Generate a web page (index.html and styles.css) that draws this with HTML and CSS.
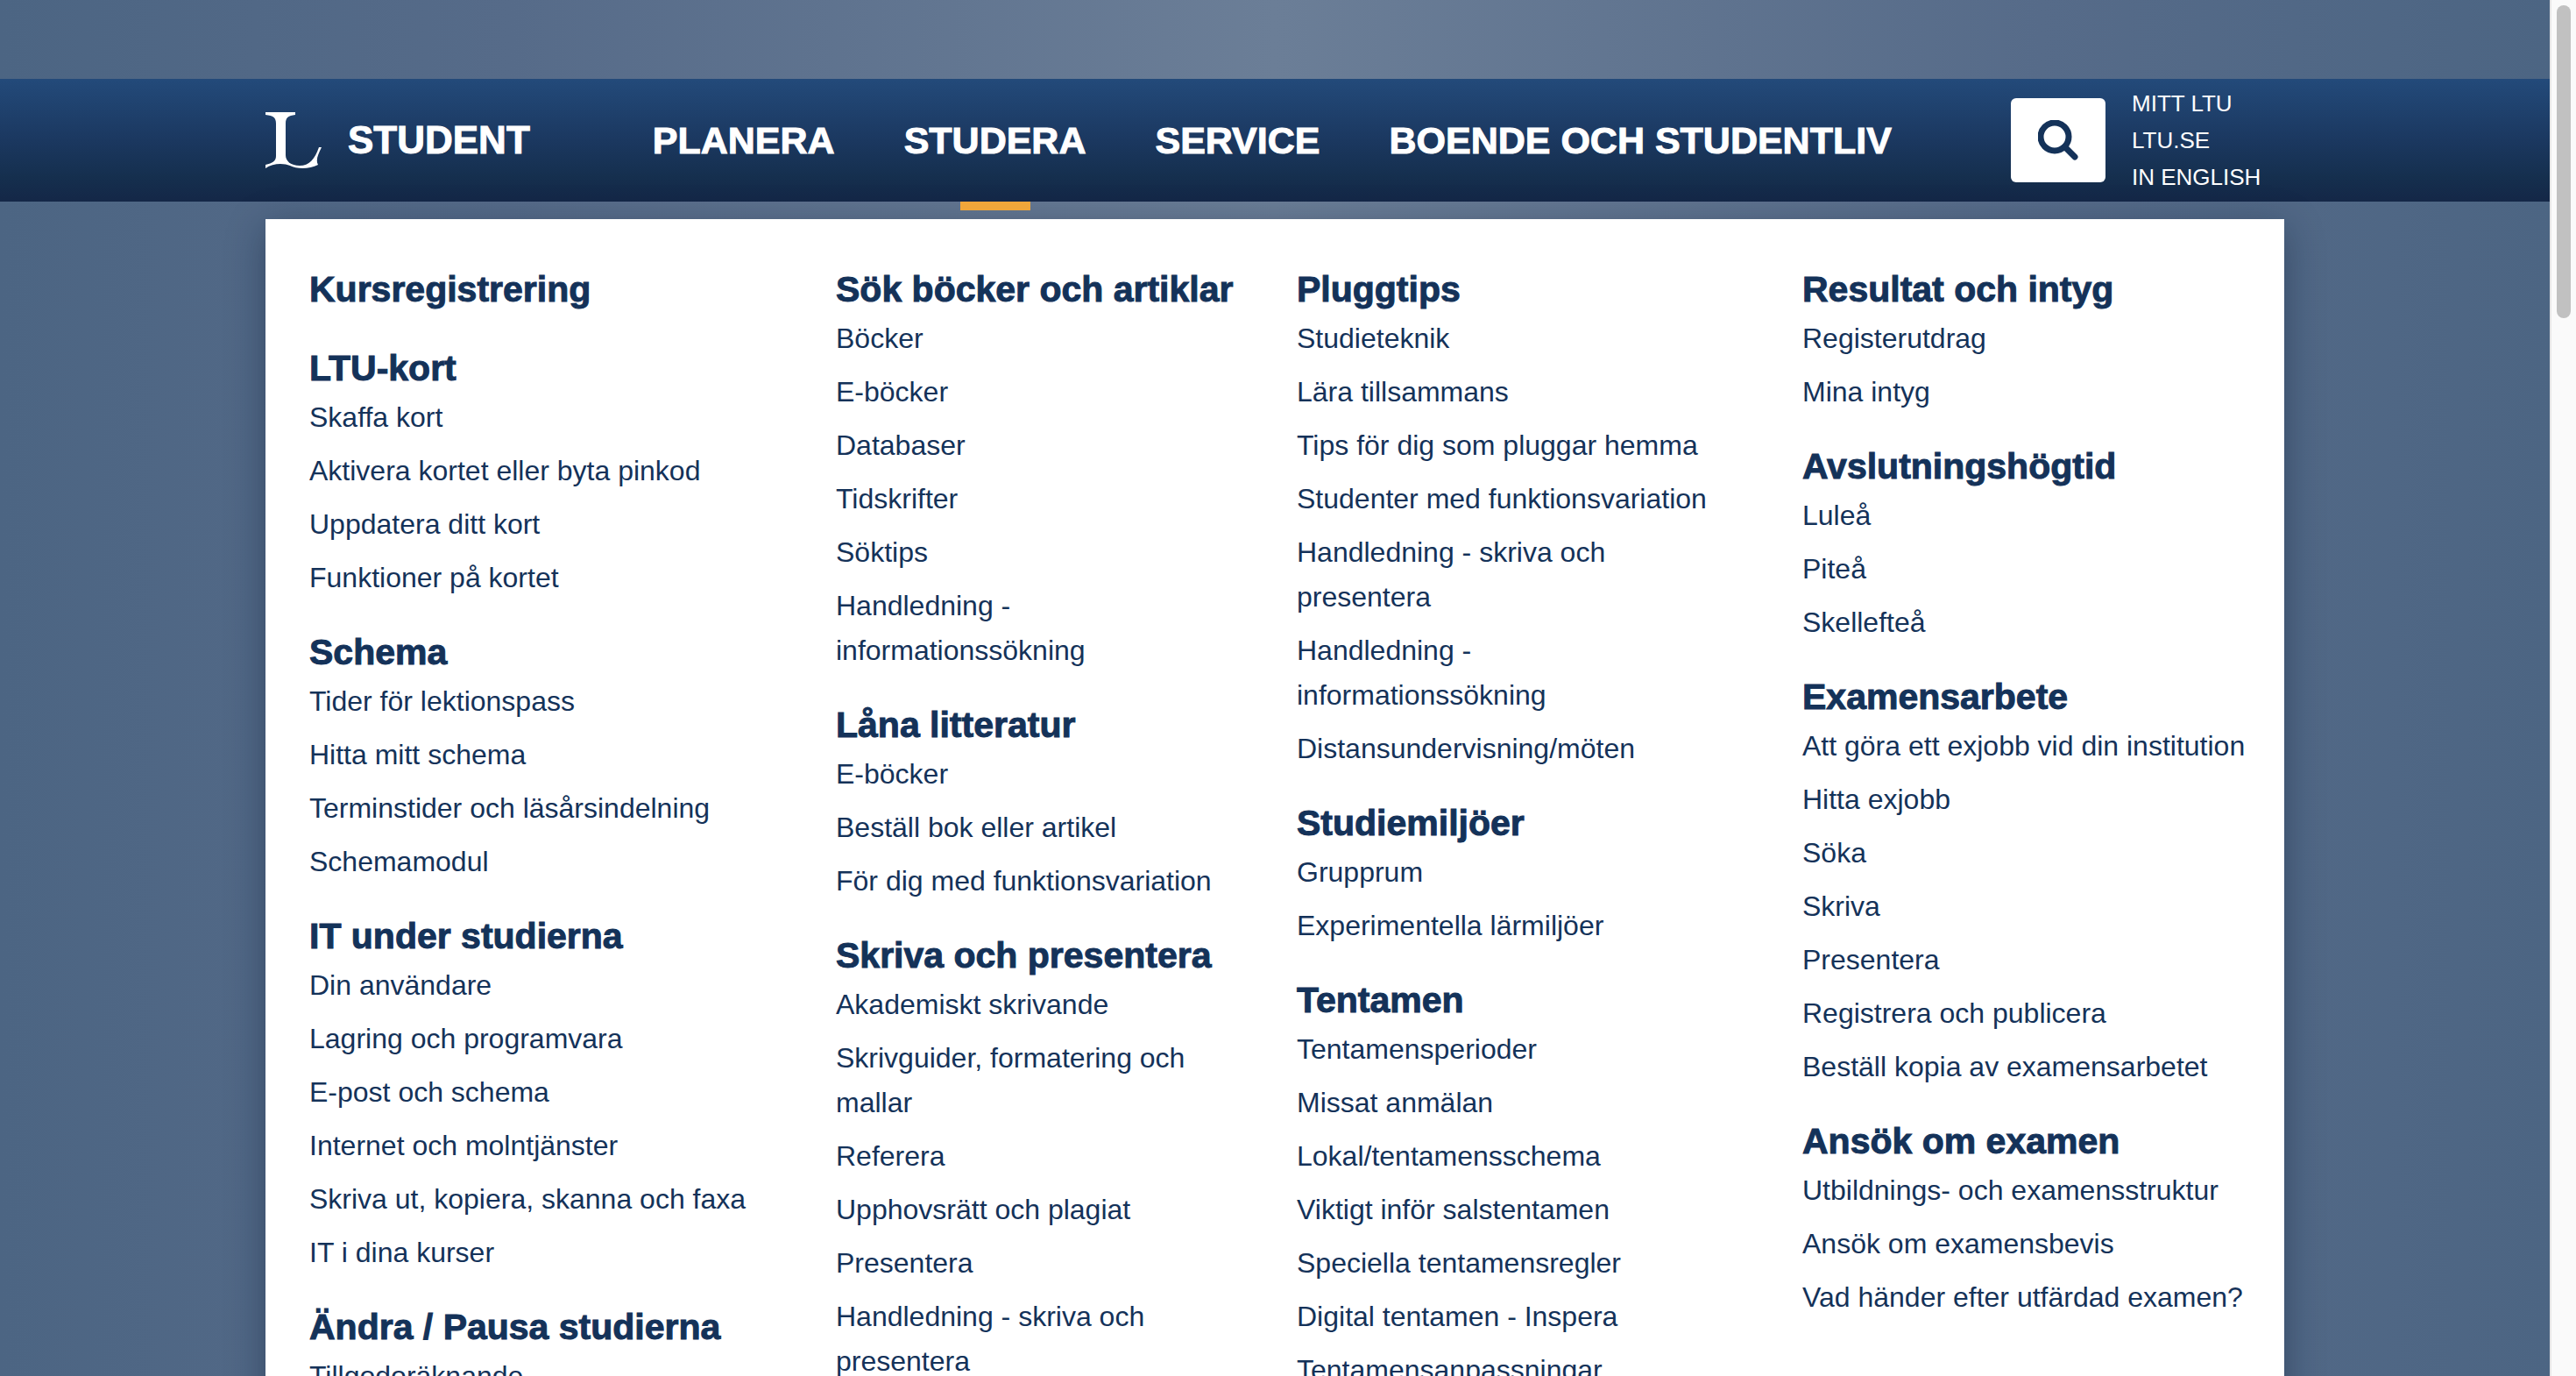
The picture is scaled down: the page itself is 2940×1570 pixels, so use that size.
FILE: index.html
```html
<!DOCTYPE html>
<html lang="sv">
<head>
<meta charset="utf-8">
<title>Student - LTU</title>
<link rel="stylesheet" href="styles.css">
</head>
<body>
<div class="viewport">
  <div class="page">
    <header class="header">
      <div class="container header-row">
        <a class="brand" href="#">
          <svg class="logo" viewBox="0 0 64 64" aria-hidden="true"><path fill="currentColor" d="M0 0H34V3C26 4 23 6 23 13V49C23 56 29 61 39 61C50 61 56 54 61 40H64C60 48 57 55 60 60C50 65 36 65 28 61C21 58 8 58 0 64V60C8 58 12 56 12 50V13C12 6 9 4 0 3Z"/></svg>
          <span>STUDENT</span>
        </a>
        <nav class="main-nav" aria-label="Huvudmeny">
          <a href="#">PLANERA</a>
          <a href="#" class="active">STUDERA</a>
          <a href="#">SERVICE</a>
          <a href="#">BOENDE OCH STUDENTLIV</a>
        </nav>
        <button class="search" type="button" aria-label="Sök">
          <svg viewBox="0 0 46 46" aria-hidden="true"><circle cx="19" cy="19" r="16" fill="none" stroke="currentColor" stroke-width="7"/><path d="M31 31L42 42" stroke="currentColor" stroke-width="7" stroke-linecap="round"/></svg>
        </button>
        <nav class="site-links" aria-label="Webbplatser">
          <a href="#">MITT LTU</a>
          <a href="#">LTU.SE</a>
          <a href="#">IN ENGLISH</a>
        </nav>
      </div>
    </header>
    <main class="container mega-menu">
      <div class="column">
        <section><h2><a href="#">Kursregistrering</a></h2></section>
        <section><h2><a href="#">LTU-kort</a></h2>
          <ul>
            <li><a href="#">Skaffa kort</a></li>
            <li><a href="#">Aktivera kortet eller byta pinkod</a></li>
            <li><a href="#">Uppdatera ditt kort</a></li>
            <li><a href="#">Funktioner på kortet</a></li>
          </ul></section>
        <section><h2><a href="#">Schema</a></h2>
          <ul>
            <li><a href="#">Tider för lektionspass</a></li>
            <li><a href="#">Hitta mitt schema</a></li>
            <li><a href="#">Terminstider och läsårsindelning</a></li>
            <li><a href="#">Schemamodul</a></li>
          </ul></section>
        <section><h2><a href="#">IT under studierna</a></h2>
          <ul>
            <li><a href="#">Din användare</a></li>
            <li><a href="#">Lagring och programvara</a></li>
            <li><a href="#">E-post och schema</a></li>
            <li><a href="#">Internet och molntjänster</a></li>
            <li><a href="#">Skriva ut, kopiera, skanna och faxa</a></li>
            <li><a href="#">IT i dina kurser</a></li>
          </ul></section>
        <section><h2><a href="#">Ändra / Pausa studierna</a></h2>
          <ul>
            <li><a href="#">Tillgodoräknande</a></li>
          </ul></section>
      </div>
      <div class="column">
        <section><h2><a href="#">Sök böcker och artiklar</a></h2>
          <ul>
            <li><a href="#">Böcker</a></li>
            <li><a href="#">E-böcker</a></li>
            <li><a href="#">Databaser</a></li>
            <li><a href="#">Tidskrifter</a></li>
            <li><a href="#">Söktips</a></li>
            <li><a href="#">Handledning - informationssökning</a></li>
          </ul></section>
        <section><h2><a href="#">Låna litteratur</a></h2>
          <ul>
            <li><a href="#">E-böcker</a></li>
            <li><a href="#">Beställ bok eller artikel</a></li>
            <li><a href="#">För dig med funktionsvariation</a></li>
          </ul></section>
        <section><h2><a href="#">Skriva och presentera</a></h2>
          <ul>
            <li><a href="#">Akademiskt skrivande</a></li>
            <li><a href="#">Skrivguider, formatering och mallar</a></li>
            <li><a href="#">Referera</a></li>
            <li><a href="#">Upphovsrätt och plagiat</a></li>
            <li><a href="#">Presentera</a></li>
            <li><a href="#">Handledning - skriva och presentera</a></li>
          </ul></section>
      </div>
      <div class="column">
        <section><h2><a href="#">Pluggtips</a></h2>
          <ul>
            <li><a href="#">Studieteknik</a></li>
            <li><a href="#">Lära tillsammans</a></li>
            <li><a href="#">Tips för dig som pluggar hemma</a></li>
            <li><a href="#">Studenter med funktionsvariation</a></li>
            <li><a href="#">Handledning - skriva och presentera</a></li>
            <li><a href="#">Handledning - informationssökning</a></li>
            <li><a href="#">Distansundervisning/möten</a></li>
          </ul></section>
        <section><h2><a href="#">Studiemiljöer</a></h2>
          <ul>
            <li><a href="#">Grupprum</a></li>
            <li><a href="#">Experimentella lärmiljöer</a></li>
          </ul></section>
        <section><h2><a href="#">Tentamen</a></h2>
          <ul>
            <li><a href="#">Tentamensperioder</a></li>
            <li><a href="#">Missat anmälan</a></li>
            <li><a href="#">Lokal/tentamensschema</a></li>
            <li><a href="#">Viktigt inför salstentamen</a></li>
            <li><a href="#">Speciella tentamensregler</a></li>
            <li><a href="#">Digital tentamen - Inspera</a></li>
            <li><a href="#">Tentamensanpassningar</a></li>
          </ul></section>
      </div>
      <div class="column">
        <section><h2><a href="#">Resultat och intyg</a></h2>
          <ul>
            <li><a href="#">Registerutdrag</a></li>
            <li><a href="#">Mina intyg</a></li>
          </ul></section>
        <section><h2><a href="#">Avslutningshögtid</a></h2>
          <ul>
            <li><a href="#">Luleå</a></li>
            <li><a href="#">Piteå</a></li>
            <li><a href="#">Skellefteå</a></li>
          </ul></section>
        <section><h2><a href="#">Examensarbete</a></h2>
          <ul>
            <li><a href="#">Att göra ett exjobb vid din institution</a></li>
            <li><a href="#">Hitta exjobb</a></li>
            <li><a href="#">Söka</a></li>
            <li><a href="#">Skriva</a></li>
            <li><a href="#">Presentera</a></li>
            <li><a href="#">Registrera och publicera</a></li>
            <li><a href="#">Beställ kopia av examensarbetet</a></li>
          </ul></section>
        <section><h2><a href="#">Ansök om examen</a></h2>
          <ul>
            <li><a href="#">Utbildnings- och examensstruktur</a></li>
            <li><a href="#">Ansök om examensbevis</a></li>
            <li><a href="#">Vad händer efter utfärdad examen?</a></li>
          </ul></section>
      </div>
    </main>
  </div>
  <div class="scrollbar" aria-hidden="true"><div class="thumb"></div></div>
</div>
</body>
</html>
```
FILE: styles.css
```css
* {
  box-sizing: border-box;
}

body {
  margin: 0;
  font-family: "Liberation Sans", Arial, sans-serif;
  color: #143259;
}

a {
  color: inherit;
  text-decoration: none;
}

.viewport {
  display: flex;
  height: 100vh;
  overflow: hidden;
}

.page {
  flex: 1;
  min-width: 0;
  overflow: hidden;
  padding-top: 90px;
  background: linear-gradient(90deg, #4c6583 0%, #566b89 20%, #6b7e97 50%, #566b89 80%, #4c6583 100%);
}

.container {
  max-width: 2304px;
  margin: 0 auto;
}

.header {
  background: linear-gradient(#234a7a, #1b3860 50%, #152f4e 80%, #142747);
}

.header-row {
  display: flex;
  align-items: center;
  height: 140px;
  color: #fff;
}

.brand {
  display: flex;
  align-items: center;
  gap: 30px;
  font-size: 44px;
  font-weight: 700;
  -webkit-text-stroke: 1px currentColor;
}

.logo {
  width: 64px;
  height: 64px;
}

.main-nav {
  display: flex;
  gap: 79px;
  height: 100%;
  margin-left: 140px;
  font-size: 43px;
  font-weight: 700;
  line-height: 140px;
  -webkit-text-stroke: 1px currentColor;
}

.active {
  position: relative;
}

.active::after {
  content: "";
  position: absolute;
  top: 100%;
  left: 50%;
  width: 80px;
  height: 10px;
  margin-left: -40px;
  background: #f0a63a;
}

.search {
  display: flex;
  align-items: center;
  justify-content: center;
  width: 108px;
  height: 96px;
  margin-left: auto;
  padding: 0;
  border: 0;
  border-radius: 6px;
  background: #fff;
  color: #143259;
}

.search svg {
  width: 46px;
  height: 46px;
}

.site-links {
  display: flex;
  flex-direction: column;
  width: 174px;
  margin-left: 30px;
  font-size: 26px;
  line-height: 42px;
}

.mega-menu {
  display: grid;
  grid-template-columns: 601fr 526fr 577fr 550fr;
  margin-top: 20px;
  padding: 55px 0 55px 50px;
  background: #fff;
  box-shadow: 0 10px 40px rgba(10, 25, 50, 0.4);
}

.column {
  padding-right: 34px;
}

.column:nth-child(3) {
  padding-right: 96px;
}

section {
  margin-bottom: 34px;
}

h2 {
  margin: 0;
  padding-bottom: 5px;
  font-size: 41px;
  line-height: 51px;
  -webkit-text-stroke: 1px currentColor;
}

ul {
  display: flex;
  flex-direction: column;
  gap: 10px;
  margin: 0;
  padding: 0;
  list-style: none;
  font-size: 32px;
  line-height: 51px;
}

.scrollbar {
  width: 30px;
  padding: 6px 6px 0;
  border-left: 2px solid #e6e6e6;
  background: #fafafa;
}

.thumb {
  width: 16px;
  height: 357px;
  border-radius: 8px;
  background: #c1c1c1;
}
```
